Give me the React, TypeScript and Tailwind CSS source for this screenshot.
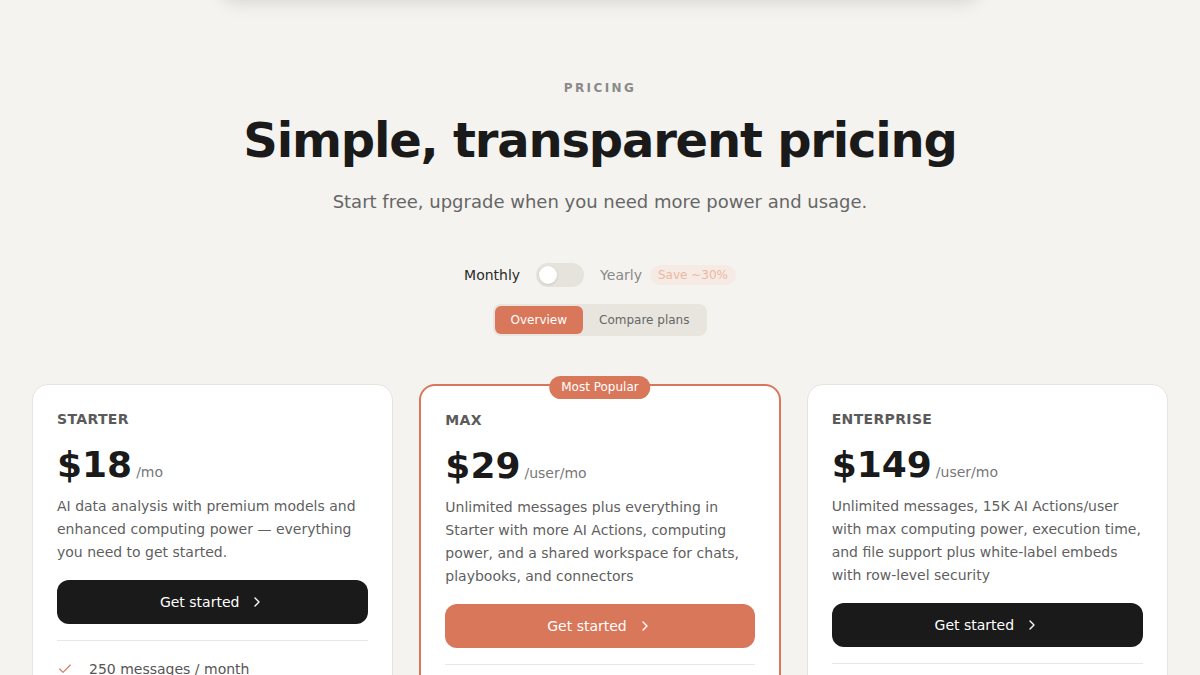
import { Check, ChevronRight } from "lucide-react";

type Plan = {
  name: string;
  price: string;
  unit: string;
  description: string;
  featured?: boolean;
  features: string[];
};

const plans: Plan[] = [
  {
    name: "Starter",
    price: "$18",
    unit: "/mo",
    description:
      "AI data analysis with premium models and enhanced computing power — everything you need to get started.",
    features: [
      "250 messages / month",
      "1,000 AI Actions / month",
      "Premium models",
      "Enhanced computing power",
    ],
  },
  {
    name: "Max",
    price: "$29",
    unit: "/user/mo",
    featured: true,
    description:
      "Unlimited messages plus everything in Starter with more AI Actions, computing power, and a shared workspace for chats, playbooks, and connectors",
    features: [
      "Unlimited messages",
      "5K AI Actions / user",
      "Shared workspace",
      "Playbooks and connectors",
    ],
  },
  {
    name: "Enterprise",
    price: "$149",
    unit: "/user/mo",
    description:
      "Unlimited messages, 15K AI Actions/user with max computing power, execution time, and file support plus white-label embeds with row-level security",
    features: [
      "Unlimited messages",
      "15K AI Actions / user",
      "White-label embeds",
      "Row-level security",
    ],
  },
];

function PlanCard({ plan }: { plan: Plan }) {
  return (
    <div
      className={
        plan.featured
          ? "relative rounded-2xl border-2 border-[#d9775a] bg-white px-6 pt-6 pb-8"
          : "relative rounded-2xl border border-[#e7e4de] bg-white px-6 pt-6 pb-8"
      }
    >
      {plan.featured && (
        <span className="absolute left-1/2 top-[-10px] -translate-x-1/2 rounded-full bg-[#d9775a] px-3 py-1 text-xs leading-[15px] text-white whitespace-nowrap">
          Most Popular
        </span>
      )}
      <h3 className="text-sm leading-5 font-bold uppercase tracking-wide text-[#5a5a5a]">
        {plan.name}
      </h3>
      <div className="mt-4 flex items-baseline gap-1">
        <span className="text-4xl leading-10 font-bold text-[#1a1a1a]">{plan.price}</span>
        <span className="text-sm text-[#777]">{plan.unit}</span>
      </div>
      <p className="mt-2.5 text-sm leading-[23px] text-[#5f5f5f]">{plan.description}</p>
      <button
        className={
          plan.featured
            ? "mt-4 flex h-11 w-full items-center justify-center gap-2.5 rounded-xl bg-[#d9775a] text-sm text-white"
            : "mt-4 flex h-11 w-full items-center justify-center gap-2.5 rounded-xl bg-[#1a1a1a] text-sm text-white"
        }
      >
        Get started
        <ChevronRight className="h-4 w-4" strokeWidth={2} />
      </button>
      <div className="mt-4 border-t border-[#e9e7e2]" />
      <ul className="mt-4 space-y-3">
        {plan.features.map((f) => (
          <li key={f} className="flex items-center gap-4 text-sm leading-6 text-[#555]">
            <Check className="h-4 w-4 shrink-0 text-[#d9775a]" strokeWidth={1.75} />
            {f}
          </li>
        ))}
      </ul>
    </div>
  );
}

export default function App() {
  return (
    <div className="min-h-screen bg-[#f4f3ef] font-['DejaVu_Sans',sans-serif] text-[#1a1a1a]">
      {/* floating nav, scrolled out of view */}
      <div className="fixed left-1/2 top-0 z-10 h-16 w-[760px] -translate-x-1/2 -translate-y-full rounded-2xl bg-[#f4f3ef] shadow-[0_2px_18px_rgba(0,0,0,0.13)]" />

      <section className="mx-auto max-w-[1200px] px-8 pt-20 pb-24">
        <div className="flex flex-col items-center text-center">
          <p className="text-xs leading-4 font-bold uppercase tracking-[0.2em] text-[#8a8a8a]">
            Pricing
          </p>
          <h1 className="mt-4 text-5xl leading-[56px] font-bold tracking-tight text-[#1a1a1a]">
            Simple, transparent pricing
          </h1>
          <p className="mt-5 text-lg leading-7 text-[#666]">
            Start free, upgrade when you need more power and usage.
          </p>

          <div className="mt-[47px] flex items-center gap-4 text-sm">
            <span className="text-[#2a2a2a]">Monthly</span>
            <button className="flex h-6 w-12 items-center rounded-full bg-[#e6e3dd] px-[3px]">
              <span className="h-[18px] w-[18px] rounded-full bg-white shadow-sm" />
            </button>
            <div className="flex items-center gap-2">
              <span className="text-[#888]">Yearly</span>
              <span className="rounded-full bg-[#f6ebe4] px-2 py-0.5 text-xs text-[#ecb7a2]">
                Save ~30%
              </span>
            </div>
          </div>

          <div className="mt-[17px] flex rounded-lg bg-[#e8e5df] p-0.5 text-xs">
            <button className="rounded-md bg-[#d9775a] px-4 py-2 leading-3 text-white">
              Overview
            </button>
            <button className="rounded-md px-4 py-2 leading-3 text-[#666]">
              Compare plans
            </button>
          </div>
        </div>

        <div className="mt-12 grid grid-cols-3 gap-[26px] items-start">
          {plans.map((p) => (
            <PlanCard key={p.name} plan={p} />
          ))}
        </div>
      </section>
    </div>
  );
}
